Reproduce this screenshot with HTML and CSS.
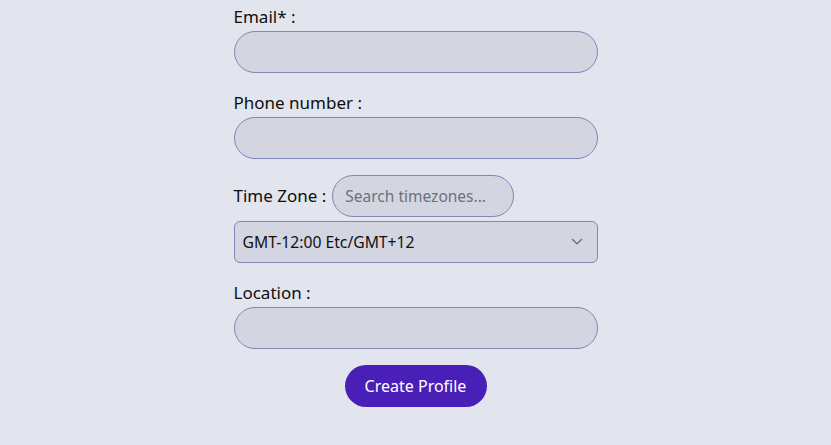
FILE: index.html
```html
<!DOCTYPE html>
<html>
<head>
<meta charset="utf-8">
<link rel="stylesheet" href="styles.css">
</head>
<body>
<form class="form">
  <div class="field">
    <label class="label">Email* :</label>
    <input class="pill-input" type="text">
  </div>
  <div class="field">
    <label class="label">Phone number :</label>
    <input class="pill-input" type="text">
  </div>
  <div class="tz-row">
    <label class="label inline">Time Zone :</label>
    <input class="pill-input search" type="text" placeholder="Search timezones...">
  </div>
  <div class="select-wrap">
    <select class="select">
      <option>GMT-12:00 Etc/GMT+12</option>
    </select>
    <svg class="chevron" width="12" height="8" viewBox="0 0 12 8"><path d="M1.5 1.5 L6 5.8 L10.5 1.5" fill="none" stroke="#6b7280" stroke-width="1.5" stroke-linecap="round" stroke-linejoin="round"/></svg>
  </div>
  <div class="field">
    <label class="label">Location :</label>
    <input class="pill-input" type="text">
  </div>
  <div class="actions">
    <button class="btn" type="button">Create Profile</button>
  </div>
</form>
</body>
</html>
```
FILE: styles.css
```css
html, body {
  margin: 0;
  padding: 0;
  background: #e2e5ed;
  font-family: "Noto Sans", "Open Sans", sans-serif;
  color: #111;
}
body {
  padding-top: 5px;
}
.form {
  width: 364px;
  margin: 0 auto;
  display: flex;
  flex-direction: column;
}
.field {
  display: flex;
  flex-direction: column;
  margin-bottom: 18px;
}
.label {
  font-size: 17px;
  line-height: 24px;
  height: 24px;
  margin-bottom: 2px;
  color: #0d0d0d;
}
.label.inline {
  margin: 0 6px 0 0;
}
.pill-input {
  box-sizing: border-box;
  height: 42px;
  width: 100%;
  border: 1px solid #7d88b6;
  border-radius: 21px;
  background: #d3d6e1;
  font-family: inherit;
  font-size: 16px;
  padding: 0 12px;
  outline: none;
  margin: 0;
}
.tz-row {
  display: flex;
  align-items: center;
  margin-top: -2px;
  margin-bottom: 4px;
}
.pill-input.search {
  width: 182px;
  font-size: 15.5px;
  color: #333;
}
.pill-input.search::placeholder {
  color: #6b7180;
}
.select-wrap {
  position: relative;
  margin-bottom: 18px;
}
.select {
  appearance: none;
  -webkit-appearance: none;
  box-sizing: border-box;
  width: 100%;
  height: 42px;
  border: 1px solid #7d88b6;
  border-radius: 6px;
  background: #d3d6e1;
  font-family: inherit;
  font-size: 15.7px;
  color: #111;
  padding: 0 8px;
  margin: 0;
  outline: none;
}
.chevron {
  position: absolute;
  right: 15px;
  top: 17px;
  pointer-events: none;
}
.actions {
  display: flex;
  justify-content: center;
  margin-top: -2px;
}
.btn {
  width: 142px;
  height: 42px;
  border: none;
  border-radius: 21px;
  background: #4a1fb8;
  color: #fff;
  font-family: inherit;
  font-size: 16px;
  padding: 0;
}
```
